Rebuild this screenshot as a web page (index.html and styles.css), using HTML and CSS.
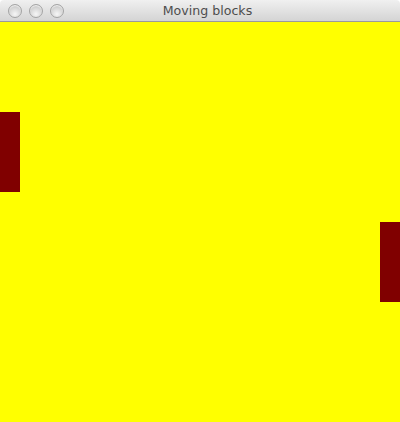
FILE: index.html
```html
<!DOCTYPE html>
<html>
<head>
<meta charset="utf-8">
<link rel="stylesheet" href="styles.css">
</head>
<body>
<div class="window">
  <div class="titlebar">
    <div class="buttons">
      <span class="btn"></span>
      <span class="btn"></span>
      <span class="btn"></span>
    </div>
    <div class="title">Moving blocks</div>
  </div>
  <div class="canvas">
    <div class="block block-left"></div>
    <div class="block block-right"></div>
  </div>
</div>
</body>
</html>
```
FILE: styles.css
```css
html, body {
  margin: 0;
  padding: 0;
  width: 400px;
  height: 422px;
  overflow: hidden;
}
.window {
  display: flex;
  flex-direction: column;
  width: 400px;
  height: 422px;
}
.titlebar {
  position: relative;
  height: 21px;
  border-bottom: 1px solid #9a9a9a;
  background: linear-gradient(#f0f0f0, #d4d4d4);
  border-radius: 4px 4px 0 0;
  display: flex;
  align-items: center;
  justify-content: center;
  flex-shrink: 0;
}
.buttons {
  position: absolute;
  left: 8px;
  top: 4px;
  display: flex;
  gap: 7px;
}
.btn {
  box-sizing: border-box;
  width: 14px;
  height: 14px;
  border-radius: 50%;
  border: 1px solid #a4a4a4;
  background: radial-gradient(circle at 50% 75%, #f6f6f6 0%, #d9d9d9 50%, #b8b8b8 100%);
  box-shadow: inset 0 1px 1px rgba(255,255,255,0.8);
}
.title {
  font-family: "Lucida Grande", "DejaVu Sans", "Liberation Sans", sans-serif;
  font-size: 12.6px;
  color: #4d4d4d;
  margin-left: 15px;
}
.canvas {
  position: relative;
  flex: 1;
  background: #ffff00;
}
.block {
  position: absolute;
  width: 20px;
  height: 80px;
  background: #800000;
}
.block-left {
  left: 0;
  top: 90px;
}
.block-right {
  right: 0;
  top: 200px;
}
```
